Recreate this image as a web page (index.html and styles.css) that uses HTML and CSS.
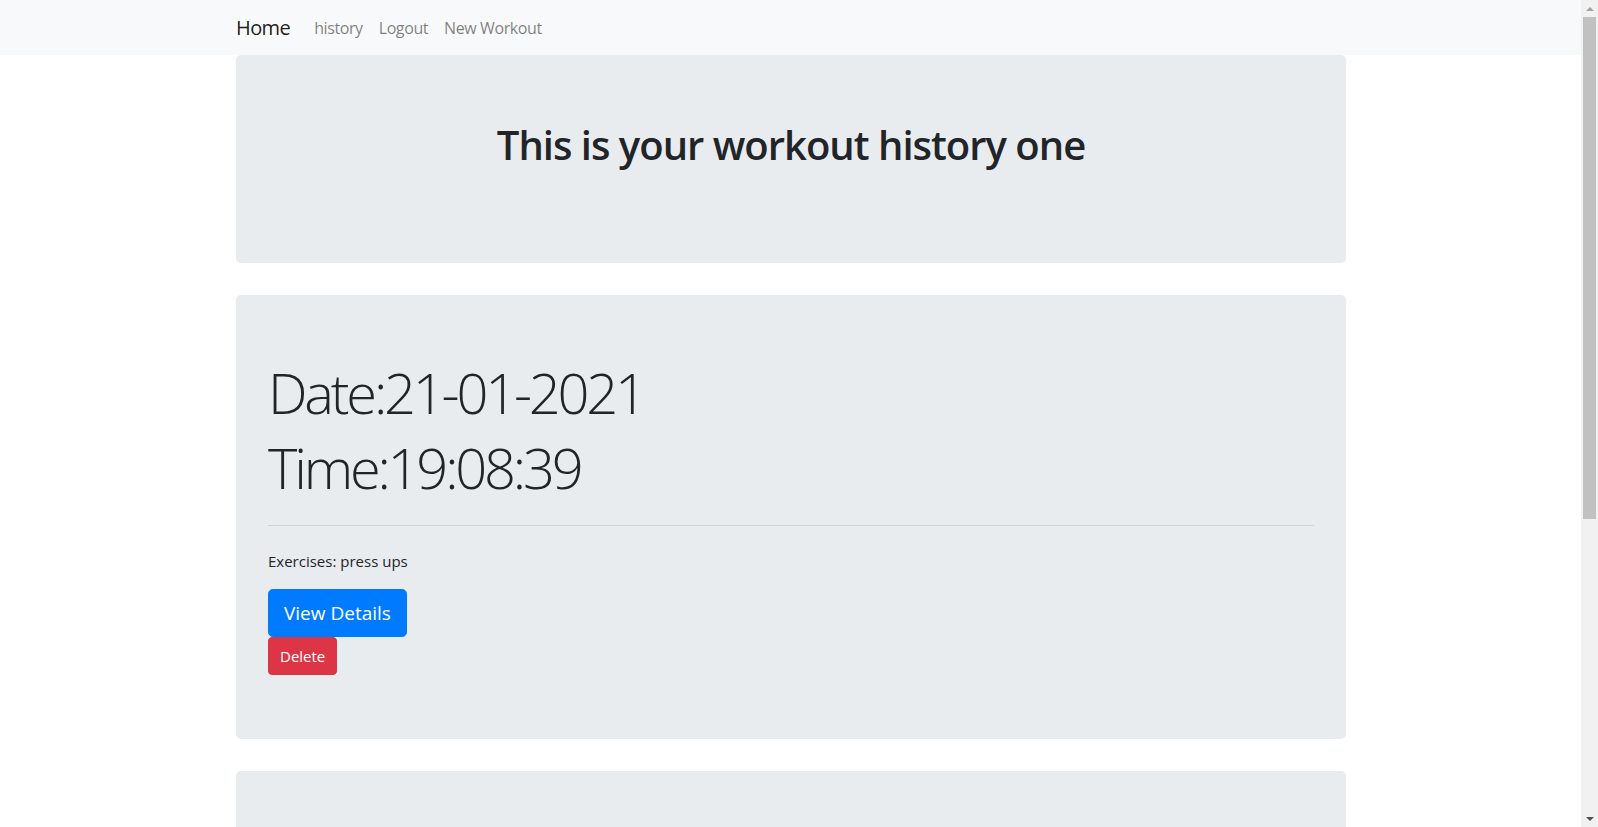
FILE: index.html
```html
<!DOCTYPE html>
<html lang="en">
<head>
<meta charset="utf-8">
<title>Workout history</title>
<link rel="stylesheet" href="styles.css">
</head>
<body>
<div class="window">
  <div class="page">
    <nav class="navbar">
      <div class="nav-container">
        <a class="brand" href="#">Home</a>
        <ul class="nav-links">
          <li><a href="#">history</a></li>
          <li><a href="#">Logout</a></li>
          <li><a href="#">New Workout</a></li>
        </ul>
      </div>
    </nav>
    <main class="container">
      <section class="jumbotron">
        <h1 class="title">This is your workout history one</h1>
        <div class="spacer"></div>
      </section>
      <section class="jumbotron">
        <h1 class="display">Date:21-01-2021</h1>
        <h1 class="display">Time:19:08:39</h1>
        <hr class="divider">
        <p class="exercises">Exercises: press ups</p>
        <a class="btn btn-lg btn-primary" href="#">View Details</a>
        <form class="delete-form"><button class="btn btn-danger" type="button">Delete</button></form>
      </section>
      <section class="jumbotron jumbotron-next">
      </section>
    </main>
  </div>
  <div class="scrollbar">
    <div class="arrow arrow-up"></div>
    <div class="track"><div class="thumb"></div></div>
    <div class="arrow arrow-down"></div>
  </div>
</div>
</body>
</html>
```
FILE: styles.css
```css
html, body {
  margin: 0;
  padding: 0;
  height: 100%;
  overflow: hidden;
}
body {
  font-family: "Open Sans", "Noto Sans", "Liberation Sans", sans-serif;
  font-size: 16px;
  line-height: 1.5;
  color: #212529;
  background: #fff;
}
.window {
  display: flex;
  height: 827px;
}
.page {
  flex: 1;
  overflow: hidden;
}
.navbar {
  background: #f8f9fa;
  height: 55px;
  display: flex;
  align-items: center;
}
.nav-container {
  width: 1110px;
  margin: 0 auto;
  display: flex;
  align-items: center;
  padding-left: 1px;
}
.brand {
  font-size: 20px;
  line-height: 30px;
  color: rgba(0,0,0,.9);
  text-decoration: none;
  margin-right: 16px;
  letter-spacing: -0.6px;
  padding-top: 1px;
}
.nav-links {
  list-style: none;
  margin: 0;
  padding: 0;
  display: flex;
}
.nav-links a {
  display: block;
  padding: 0 8px;
  color: rgba(0,0,0,.5);
  text-decoration: none;
  font-size: 16px;
  line-height: 24px;
  letter-spacing: -0.4px;
}
.container {
  width: 1110px;
  margin: 0 auto;
  padding-left: 1px;
}
.jumbotron {
  background: #e9ecef;
  border-radius: 4.8px;
  padding: 64px 32px;
  margin-bottom: 32px;
}
.jumbotron-next {
  min-height: 200px;
}
.title {
  margin: 2px 0 8px;
  text-align: center;
  font-size: 40px;
  line-height: 48px;
  font-weight: 600;
  letter-spacing: -1px;
}
.spacer {
  height: 22px;
}
.display {
  margin: 0 0 8px;
  font-size: 56px;
  line-height: 67px;
  font-weight: 300;
  letter-spacing: -3.2px;
}
.divider {
  margin: 24px 0;
  border: 0;
  border-top: 1px solid rgba(0,0,0,.1);
}
.exercises {
  margin: 0 0 16px;
  font-size: 15px;
}
.btn {
  display: inline-block;
  font-family: inherit;
  color: #fff;
  border: 1px solid transparent;
  text-decoration: none;
  cursor: pointer;
}
.btn-lg {
  font-size: 19px;
  line-height: 30px;
  padding: 8px 15px;
  border-radius: 4.8px;
}
.btn-primary {
  background: #007bff;
  border-color: #007bff;
}
.delete-form {
  margin: 0;
}
.btn-danger {
  background: #dc3545;
  border-color: #dc3545;
  font-size: 15px;
  line-height: 24px;
  padding: 6px 11px;
  border-radius: 4px;
}
.scrollbar {
  width: 17px;
  background: #f1f1f1;
  display: flex;
  flex-direction: column;
}
.arrow {
  height: 17px;
  display: flex;
  align-items: center;
  justify-content: center;
}
.arrow::before {
  content: "";
  width: 0;
  height: 0;
  border-left: 4px solid transparent;
  border-right: 4px solid transparent;
}
.arrow-up::before {
  border-bottom: 4px solid #a3a3a3;
}
.arrow-down::before {
  border-top: 4px solid #505050;
}
.track {
  flex: 1;
  padding: 0 2px;
}
.thumb {
  height: 502px;
  background: #c1c1c1;
}
```
